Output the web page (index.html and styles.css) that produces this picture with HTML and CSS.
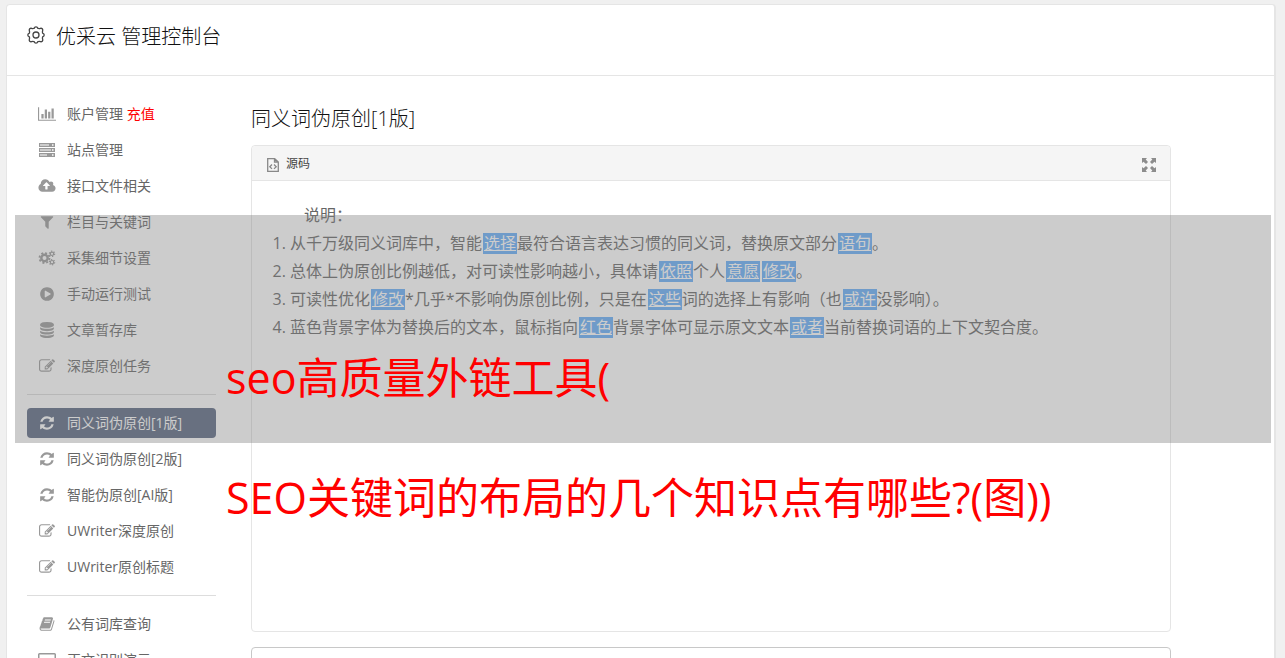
FILE: index.html
```html
<!DOCTYPE html>
<html lang="zh-CN">
<head>
    <meta charset="utf-8">
    <title>优采云 管理控制台</title>
    <link rel="stylesheet" href="styles.css">
</head>
<body>
    <svg class="sprite" aria-hidden="true">
        <symbol id="i-chart" viewBox="0 0 2048 1792"><path d="M640 896v512h-256v-512h256zm384-512v1024h-256v-1024h256zm1024 1152v128h-2048v-1536h128v1408h1920zm-640-896v768h-256v-768h256zm384-384v1152h-256v-1152h256z"/></symbol>
        <symbol id="i-server" viewBox="-1 -1 18 16"><path fill-rule="evenodd" d="M0 0h16v4H0zM1 1.500v1h9v-1zM13 1.300v1.400h1.500V1.300zM0 5h16v4H0zM1 6.500v1h11v-1zM13 6.300v1.400h1.500V6.300zM0 10h16v4H0zM1 11.500v1h7v-1zM13 11.300v1.400h1.500v-1.400z"/></symbol>
        <symbol id="i-upload" viewBox="0 0 1920 1792"><path d="M1280 864q0-14-9-23l-352-352q-9-9-23-9t-23 9l-351 351q-10 12-10 24 0 14 9 23t23 9h224v352q0 13 9.500 22.500t22.500 9.500h192q13 0 22.500-9.500t9.500-22.500v-352h224q13 0 22.500-9.500t9.500-22.500zm640 288q0 159-112.500 271.500t-271.500 112.500h-1088q-185 0-316.500-131.500t-131.500-316.500q0-130 70-240t188-165q-2-30-2-43 0-212 150-362t362-150q156 0 285.500 87t188.500 231q71-62 166-62 106 0 181 75t75 181q0 76-41 138 130 31 213.500 135.500t83.500 238.500z"/></symbol>
        <symbol id="i-filter" viewBox="0 0 1792 1792"><path d="M1595 295q17 41-14 70l-493 493v742q0 42-39 59-13 5-25 5-27 0-45-19l-256-256q-19-19-19-45v-486l-493-493q-31-29-14-70 17-39 59-39h1280q42 0 59 39z"/></symbol>
        <symbol id="i-cogs" viewBox="0 0 17 16">
            <g fill="none" stroke="currentColor">
                <circle cx="6" cy="8" r="3.200" stroke-width="2.400"/>
                <circle cx="6" cy="8" r="5" stroke-width="1.800" stroke-dasharray="2 1.927"/>
                <circle cx="13.500" cy="3.800" r="1.700" stroke-width="1.200"/>
                <circle cx="13.500" cy="3.800" r="2.700" stroke-width="1.100" stroke-dasharray="1.300 1.530"/>
                <circle cx="13.500" cy="12.200" r="1.700" stroke-width="1.200"/>
                <circle cx="13.500" cy="12.200" r="2.700" stroke-width="1.100" stroke-dasharray="1.300 1.530"/>
            </g>
        </symbol>
        <symbol id="i-play" viewBox="0 0 1792 1792"><path d="M896 128q209 0 385.500 103t279.500 279.500 103 385.500-103 385.500-279.500 279.500-385.500 103-385.500-103-279.500-279.500-103-385.500 103-385.500 279.500-279.500 385.500-103zm384 823q32-18 32-55t-32-55l-544-320q-31-19-64-1-32 19-32 56v640q0 37 32 56 16 8 32 8 17 0 32-9z"/></symbol>
        <symbol id="i-database" viewBox="0 0 1792 1792"><path d="M896 768q237 0 443-43t325-127v170q0 69-103 128t-280 93.500-385 34.500-385-34.500-280-93.500-103-128v-170q119 84 325 127t443 43zm0 768q237 0 443-43t325-127v170q0 69-103 128t-280 93.500-385 34.500-385-34.500-280-93.500-103-128v-170q119 84 325 127t443 43zm0-384q237 0 443-43t325-127v170q0 69-103 128t-280 93.500-385 34.500-385-34.500-280-93.500-103-128v-170q119 84 325 127t443 43zm0-1152q208 0 385 34.500t280 93.500 103 128v128q0 69-103 128t-280 93.500-385 34.500-385-34.500-280-93.500-103-128v-128q0-69 103-128t280-93.500 385-34.500z"/></symbol>
        <symbol id="i-edit" viewBox="0 0 1792 1792"><path d="M888 1184l116-116-152-152-116 116v56h96v96h56zm440-720q-16-16-33 1l-350 350q-17 17-1 33t33-1l350-350q17-17 1-33zm80 594v190q0 119-84.500 203.500t-203.500 84.500h-832q-119 0-203.500-84.500t-84.500-203.500v-832q0-119 84.500-203.500t203.500-84.500h832q63 0 117 25 15 7 18 23 3 17-9 29l-49 49q-14 14-32 8-23-6-45-6h-832q-66 0-113 47t-47 113v832q0 66 47 113t113 47h832q66 0 113-47t47-113v-126q0-13 9-22l64-64q15-15 35-7t20 29zm-96-738l288 288-672 672h-288v-288zm444 132l-92 92-288-288 92-92q28-28 68-28t68 28l152 152q28 28 28 68t-28 68z"/></symbol>
        <symbol id="i-refresh" viewBox="0 0 1792 1792"><path d="M1639 1056q0 5-1 7-64 268-268 434.500t-478 166.500q-146 0-282.500-55t-243.500-157l-129 129q-19 19-45 19t-45-19-19-45v-448q0-26 19-45t45-19h448q26 0 45 19t19 45-19 45l-137 137q71 66 161 102t187 36q134 0 250-65t186-179q11-17 53-117 8-23 30-23h192q13 0 22.500 9.500t9.500 22.500zm25-800v448q0 26-19 45t-45 19h-448q-26 0-45-19t-19-45 19-45l138-138q-148-137-349-137-134 0-250 65t-186 179q-11 17-53 117-8 23-30 23h-199q-13 0-22.500-9.500t-9.500-22.500v-7q65-268 270-434.500t480-166.500q146 0 284 55.500t245 156.500l130-129q19-19 45-19t45 19 19 45z"/></symbol>
        <symbol id="i-book" viewBox="0 0 1792 1792"><path d="M1703 478q40 57 18 129l-275 906q-19 64-76.500 107.500t-122.500 43.500h-923q-77 0-148.500-53.500t-99.500-131.500q-24-67-2-127 0-4 3-27t4-37q1-8-3-21.500t-3-19.500q2-11 8-21t16.500-23.500 16.500-23.500q23-38 45-91.500t30-91.500q3-10 .5-30t-.5-28q3-11 17-28t17-23q21-36 42-92t25-90q1-9-2.500-32t.5-28q4-13 22-30.500t22-22.500q19-26 42.500-84.500t27.500-96.500q1-8-3-25.500t-2-26.500q2-8 9-18t18-23 17-21q8-12 16.500-30.500t15-35 16-36 19.500-32 26.500-23.500 36-11.500 47.500 5.500l-1 3q38-9 51-9h761q74 0 114 56t18 130l-274 906q-36 119-71.500 153.500t-128.500 34.500h-869q-27 0-38 15-11 16-1 43 24 70 144 70h923q29 0 56-15.500t35-41.500l300-987q7-22 5-57 38 15 59 43zm-1064 2q-4 13 2 22.500t20 9.500h608q13 0 25.500-9.500t16.500-22.500l21-64q4-13-2-22.500t-20-9.500h-608q-13 0-25.500 9.500t-16.500 22.500zm-83 256q-4 13 2 22.500t20 9.500h608q13 0 25.500-9.500t16.500-22.500l21-64q4-13-2-22.500t-20-9.500h-608q-13 0-25.500 9.500t-16.500 22.500z"/></symbol>
        <symbol id="i-screen" viewBox="0 -1 18 16"><path fill-rule="evenodd" d="M1.500 0h15q1.500 0 1.500 1.500v8q0 1.500-1.500 1.500H11v2h2v1H5v-1h2v-2H1.500Q0 11 0 9.500v-8Q0 0 1.500 0zM1.500 1.500v7h15v-7z"/></symbol>
    </svg>

    <div class="console">
        <header class="console-header">
            <svg class="gear" viewBox="0 0 18 18" aria-hidden="true">
                <path d="M9 .8c1.100 0 1.600.5 1.900 1.600 1 .2 1.500.4 2.500-.1 1.600-.3 2.600.7 2.300 2.300-.5 1-.3 1.500-.1 2.500 1.100.3 1.600.8 1.600 1.900s-.5 1.600-1.600 1.900c-.2 1-.4 1.500.1 2.500.3 1.600-.7 2.600-2.300 2.300-1-.5-1.500-.3-2.500-.1-.3 1.100-.8 1.600-1.900 1.600s-1.600-.5-1.900-1.600c-1-.2-1.500-.4-2.500.1-1.600.3-2.600-.7-2.300-2.300.5-1 .3-1.500.1-2.500C1.300 10.600.8 10.100.8 9s.5-1.600 1.600-1.900c.2-1 .4-1.500-.1-2.500C2 3 3 2 4.600 2.300c1 .5 1.500.3 2.500.1C7.400 1.300 7.900.8 9 .8z"/>
                <circle cx="9" cy="9" r="3"/>
            </svg>
            <h1>优采云 管理控制台</h1>
        </header>

        <div class="console-body">
            <nav class="sidebar">
                <ul>
                    <li><a href="#"><svg><use href="#i-chart"/></svg><span>账户管理 <em>充值</em></span></a></li>
                    <li><a href="#"><svg><use href="#i-server"/></svg><span>站点管理</span></a></li>
                    <li><a href="#"><svg><use href="#i-upload"/></svg><span>接口文件相关</span></a></li>
                    <li><a href="#"><svg><use href="#i-filter"/></svg><span>栏目与关键词</span></a></li>
                    <li><a href="#"><svg><use href="#i-cogs"/></svg><span>采集细节设置</span></a></li>
                    <li><a href="#"><svg><use href="#i-play"/></svg><span>手动运行测试</span></a></li>
                    <li><a href="#"><svg><use href="#i-database"/></svg><span>文章暂存库</span></a></li>
                    <li><a href="#"><svg><use href="#i-edit"/></svg><span>深度原创任务</span></a></li>
                    <li class="divider"></li>
                    <li class="active"><a href="#"><svg><use href="#i-refresh"/></svg><span>同义词伪原创[1版]</span></a></li>
                    <li><a href="#"><svg><use href="#i-refresh"/></svg><span>同义词伪原创[2版]</span></a></li>
                    <li><a href="#"><svg><use href="#i-refresh"/></svg><span>智能伪原创[AI版]</span></a></li>
                    <li><a href="#"><svg><use href="#i-edit"/></svg><span>UWriter深度原创</span></a></li>
                    <li><a href="#"><svg><use href="#i-edit"/></svg><span>UWriter原创标题</span></a></li>
                    <li class="divider"></li>
                    <li><a href="#"><svg><use href="#i-book"/></svg><span>公有词库查询</span></a></li>
                    <li><a href="#"><svg><use href="#i-screen"/></svg><span>正文识别演示</span></a></li>
                </ul>
            </nav>

            <main class="content">
                <h2>同义词伪原创[1版]</h2>
                <div class="editor">
                    <div class="toolbar">
                        <button type="button" class="tool">
                            <svg class="source-icon" viewBox="0 0 12 14" aria-hidden="true"><path d="M.7.700h7L11.300 4v9.300H.7zM7.500.700V4h3.800M5 6.500L2.800 8.700 5 10.900M7 6.500l2.200 2.200L7 10.900"/></svg>
                            源码
                        </button>
                        <button type="button" class="tool" aria-label="全屏">
                            <svg class="full-icon" viewBox="0 0 14 14" aria-hidden="true"><path d="M0 0h5L3.700 1.500 6 4 4 6 1.500 3.700 0 5zM14 0v5l-1.500-1.300L10 6 8 4l2.300-2.500L9 0zM0 14V9l1.500 1.300L4 8l2 2-2.300 2.500L5 14zM14 14H9l1.300-1.500L8 10l2-2 2.500 2.300L14 9z"/></svg>
                        </button>
                    </div>
                    <div class="document">
                        <p>说明：</p>
                        <ol>
                            <li>从千万级同义词库中，智能<u>选择</u>最符合语言表达习惯的同义词，替换原文部分<u>语句</u>。</li>
                            <li>总体上伪原创比例越低，对可读性影响越小，具体请<u>依照</u>个人<u>意愿</u><u class="next">修改</u>。</li>
                            <li>可读性优化<u>修改</u>*几乎*不影响伪原创比例，只是在<u>这些</u>词的选择上有影响（也<u>或许</u>没影响）。</li>
                            <li>蓝色背景字体为替换后的文本，鼠标指向<u>红色</u>背景字体可显示原文文本<u>或者</u>当前替换词语的上下文契合度。</li>
                        </ol>
                    </div>
                </div>
                <textarea class="result" aria-label="结果"></textarea>
            </main>
        </div>
    </div>

    <!-- caption band over the page -->
    <div class="band"></div>
    <div class="captions">
        <p>seo高质量外链工具(</p>
        <p>SEO关键词的布局的几个知识点有哪些?(图))</p>
    </div>
</body>
</html>
```

FILE: styles.css
```css
* {
    box-sizing: border-box;
}
body {
    margin: 0;
    padding: 4px 9px 0 6px;
    height: 100vh;
    overflow: hidden;
    background-color: #f0f0f0;
    color: #333;
    font-family: "Open Sans", "Noto Sans CJK SC", sans-serif;
    font-size: 14px;
}
h1, h2, p, ul, ol {
    margin: 0;
    padding: 0;
    font-weight: normal;
}
.sprite {
    position: absolute;
    width: 0;
    height: 0;
}
.console {
    background-color: #fff;
    border: 1px solid #e5e5e5;
    border-right-width: 2px;
    border-radius: 4px;
}
.console-header {
    display: flex;
    align-items: flex-start;
    gap: 11px;
    height: 71px;
    padding: 17px 20px;
    border-bottom: 1px solid #e5e5e5;
}
.console-header h1,
.content h2 {
    color: #111;
    font-size: 20px;
    font-weight: 300;
    line-height: 30px;
}
.gear {
    width: 18px;
    height: 18px;
    margin-top: 4px;
    fill: none;
    stroke: #444;
    stroke-width: 1.3;
}
.console-body {
    display: grid;
    grid-template-columns: 189px minmax(0, 920px);
    gap: 35px;
    padding: 23px 20px;
}

/* sidebar */
.sidebar ul {
    display: flex;
    flex-direction: column;
    gap: 6px;
    list-style: none;
}
.sidebar a {
    display: flex;
    align-items: center;
    gap: 11px;
    height: 30px;
    padding: 0 11px;
    border-radius: 4px;
    color: #666;
    line-height: 30px;
    text-decoration: none;
    white-space: nowrap;
}
.sidebar em {
    color: #f00;
    font-style: normal;
}
.sidebar svg {
    flex: none;
    width: 18px;
    height: 16px;
    color: #999;
    fill: currentColor;
}
.sidebar .active a {
    background-color: #596680;
    color: #fff;
}
.sidebar .active svg {
    color: #fff;
}
.sidebar .divider {
    height: 1px;
    margin: 7px 0;
    background-color: #ddd;
}

/* editor */
.content h2 {
    padding-top: 5px;
    margin-bottom: 11px;
}
.editor {
    border: 1px solid #e5e5e5;
    border-radius: 4px;
}
.toolbar {
    display: flex;
    align-items: center;
    justify-content: space-between;
    height: 35px;
    padding: 0 14px 0 15px;
    background-color: #f5f5f5;
    border-bottom: 1px solid #e5e5e5;
    border-radius: 4px 4px 0 0;
}
.tool {
    display: flex;
    align-items: center;
    gap: 7px;
    padding: 0;
    border: 0;
    background: none;
    color: #444;
    font-family: inherit;
    font-size: 12px;
}
.source-icon {
    width: 12px;
    height: 14px;
    margin-top: 3px;
    fill: none;
    stroke: #888;
    stroke-width: 1.3;
}
.full-icon {
    width: 14px;
    height: 14px;
    margin-top: 3px;
    fill: #8c8c8c;
}
.document {
    min-height: 450px;
    padding: 20px;
    color: #666;
    font-size: 16px;
    line-height: 28px;
}
.document p {
    text-indent: 2em;
}
.document ol {
    padding-left: 18px;
}
.document u {
    display: inline-block;
    height: 21px;
    margin-left: 1px;
    padding: 0 1px;
    background-color: #64adfa;
    color: #fff;
    line-height: 21px;
    vertical-align: baseline;
}
.document .next {
    margin-left: 2px;
}
.result {
    display: block;
    width: 100%;
    height: 120px;
    margin-top: 15px;
    padding: 10px;
    border: 1px solid #c8c8c8;
    border-radius: 4px;
    resize: none;
}

/* caption band */
.band {
    position: absolute;
    top: 215px;
    left: 15px;
    right: 14px;
    height: 228px;
    background-color: rgba(128, 128, 128, 0.4);
}
.captions {
    position: absolute;
    top: 318px;
    left: 226px;
    color: #f00;
    font-size: 43px;
    line-height: 120px;
    white-space: nowrap;
}
```
